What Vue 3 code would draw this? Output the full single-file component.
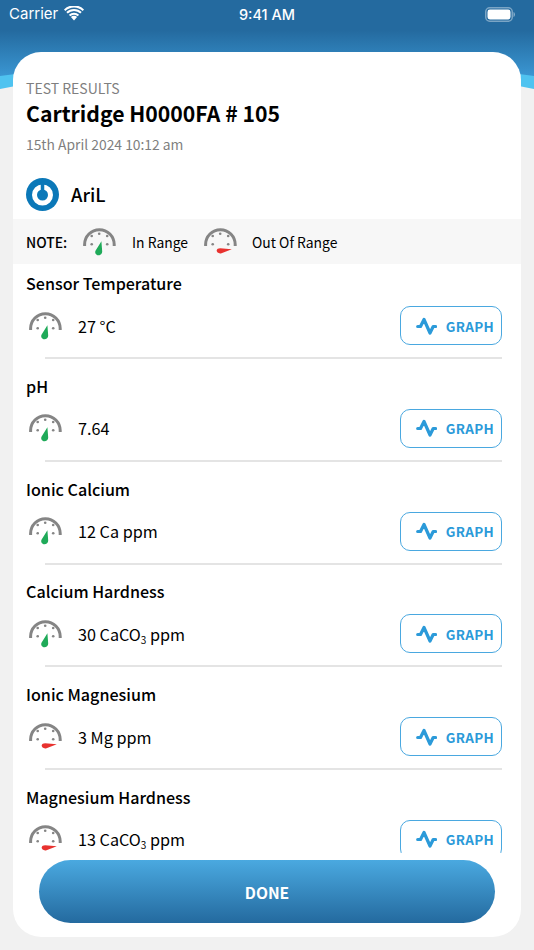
<script setup>
const rows = [
  { title: 'Sensor Temperature', value: '27 °C', ok: true },
  { title: 'pH', value: '7.64', ok: true },
  { title: 'Ionic Calcium', value: '12 Ca ppm', ok: true },
  { title: 'Calcium Hardness', pre: '30 CaCO', post: ' ppm', ok: true },
  { title: 'Ionic Magnesium', value: '3 Mg ppm', ok: false },
  { title: 'Magnesium Hardness', pre: '13 CaCO', post: ' ppm', ok: false },
]
const dots = [[9.7, 9], [17.2, 6.8], [25.2, 9], [9.7, 17.3], [25.2, 17.3]]
const arc = 'M2.600 19V17.500A14.800 14.800 0 0 1 32.200 17.500V19'
const green = 'M19.400 14.200 20.200 24.500c.2 2.400-1.900 3.800-3.700 3.800-2.700 0-3.900-2.500-3-4.500Z'
const red = 'M28.800 22.300 18.500 26.200c-2.800.7-4.900-.8-4.800-2.600.1-1.500 1.500-2.300 3.500-2.300Z'
</script>

<template>
  <div class="page">
    <svg class="backdrop" viewBox="0 0 534 100" width="534" height="100" preserveAspectRatio="none" aria-hidden="true">
      <defs>
        <linearGradient id="sky" x1="0" y1="0" x2="0" y2="1">
          <stop offset="0" stop-color="#246a9f" />
          <stop offset="0.4" stop-color="#246a9f" />
          <stop offset="1" stop-color="#3a96d2" />
        </linearGradient>
      </defs>
      <path d="M0 0 H534 V89 Q400 62 267 62 Q134 62 0 89 Z" fill="#4fc3f0" />
      <path d="M0 0 H534 V76 Q400 58 267 58 Q134 58 0 76 Z" fill="url(#sky)" />
    </svg>

    <div class="status">
      <div class="status-left">
        <span>Carrier</span>
        <svg width="20" height="15" viewBox="0 0 20 15">
          <path d="M10 14.500 6.900 11a4.400 4.400 0 0 1 6.200 0Z" fill="#fff" />
          <path d="M4.900 8.800a7.300 7.300 0 0 1 10.200 0l-1.300 1.400a5.400 5.400 0 0 0-7.600 0Z" fill="#fff" />
          <path d="M2.300 6.100a11 11 0 0 1 15.400 0l-1.400 1.400a9 9 0 0 0-12.600 0Z" fill="#fff" />
          <path d="M-.1 3.500a14.400 14.400 0 0 1 20.200 0L18.700 5A12.400 12.400 0 0 0 1.300 5Z" fill="#fff" />
        </svg>
      </div>
      <span class="clock">9:41 AM</span>
      <svg class="battery" width="30" height="15" viewBox="0 0 30 15">
        <rect x="0.750" y="0.750" width="26.500" height="13.500" rx="4" fill="none" stroke="#fff" stroke-opacity="0.4" stroke-width="1.500" />
        <rect x="2.500" y="2.500" width="23" height="10" rx="2.400" fill="#fff" />
        <path d="M28.500 5v5c.9-.3 1.500-1.400 1.500-2.500S29.400 5.300 28.500 5Z" fill="#fff" fill-opacity="0.45" />
      </svg>
    </div>

    <main class="card">
      <header class="head">
        <div class="eyebrow">TEST RESULTS</div>
        <h1 class="title">Cartridge H0000FA # 105</h1>
        <div class="date">15th April 2024 10:12 am</div>
      </header>

      <div class="user">
        <svg width="33" height="33" viewBox="0 0 33 33">
          <circle cx="16.500" cy="16.500" r="16.500" fill="#0b78b8" />
          <circle cx="16.500" cy="17" r="8" fill="none" stroke="#fff" stroke-width="5" />
          <path d="M16.500 5v11" stroke="#0b78b8" stroke-width="3.500" stroke-linecap="round" />
        </svg>
        <span>AriL</span>
      </div>

      <div class="note">
        <strong>NOTE:</strong>
        <svg class="gauge" viewBox="0 0 36 30" width="36" height="30">
          <path :d="arc" fill="none" stroke="#858585" stroke-width="3" />
          <circle v-for="d in dots" :key="d.join()" :cx="d[0]" :cy="d[1]" r="1.300" fill="#858585" />
          <path :d="green" fill="#1faa59" />
        </svg>
        <span class="in-range">In Range</span>
        <svg class="gauge" viewBox="0 0 36 30" width="36" height="30">
          <path :d="arc" fill="none" stroke="#858585" stroke-width="3" />
          <circle v-for="d in dots" :key="d.join()" :cx="d[0]" :cy="d[1]" r="1.300" fill="#858585" />
          <path :d="red" fill="#e8322f" />
        </svg>
        <span class="out-range">Out Of Range</span>
      </div>

      <div class="list">
        <section v-for="r in rows" :key="r.title" class="row">
          <div class="row-title">{{ r.title }}</div>
          <div class="row-body">
            <svg class="gauge" viewBox="0 0 36 30" width="36" height="30">
              <path :d="arc" fill="none" stroke="#858585" stroke-width="3" />
              <circle v-for="d in dots" :key="d.join()" :cx="d[0]" :cy="d[1]" r="1.300" fill="#858585" />
              <path :d="r.ok ? green : red" :fill="r.ok ? '#1faa59' : '#e8322f'" />
            </svg>
            <span class="value">
              <template v-if="r.value">{{ r.value }}</template>
              <template v-else>{{ r.pre }}<sub>3</sub>{{ r.post }}</template>
            </span>
            <button class="graph" type="button">
              <svg width="21" height="18" viewBox="0 0 21 18">
                <path d="M1.700 9.500H4.500L8 2.500 14 16 17.200 9.500H19.500" fill="none" stroke="#2b9ad9" stroke-width="3.200" stroke-linecap="round" stroke-linejoin="round" />
              </svg>
              <span>GRAPH</span>
            </button>
          </div>
          <div class="rule"></div>
        </section>
      </div>

      <div class="foot">
        <button class="done" type="button">DONE</button>
      </div>
    </main>
  </div>
</template>

<style>
html, body { margin: 0; background: #f1f1f1; }
</style>

<style scoped>
.page {
  position: relative;
  width: 534px;
  height: 950px;
  overflow: hidden;
  background: #f1f1f1;
  font-family: "Noto Sans CJK SC", "Noto Sans", sans-serif;
  color: #000;
}
.backdrop { position: absolute; top: 0; left: 0; }
.status {
  position: relative;
  height: 28px;
  display: flex;
  align-items: center;
  padding: 0 19px 0 9px;
  color: #fff;
  font-family: Inter, "Liberation Sans", sans-serif;
  font-size: 15px;
}
.status-left { display: flex; align-items: center; gap: 6px; width: 120px; margin-top: -1px; }
.clock { position: absolute; left: 0; right: 0; text-align: center; font-size: 14.500px; font-weight: 500; }
.battery { margin-left: auto; }
.card {
  position: relative;
  margin: 24px 13px 0;
  width: 508px;
  height: 885px;
  background: #fff;
  border-radius: 28px;
  overflow: hidden;
  display: flex;
  flex-direction: column;
}
.head { padding: 26px 13px 0; }
.eyebrow { font-size: 14px; line-height: 20px; color: #7f7f7f; }
.title { margin: 0; font-size: 21.200px; line-height: 30px; font-weight: 700; }
.date { margin-top: 6px; font-size: 13.850px; line-height: 20px; color: #7f7f7f; }
.user {
  display: flex;
  align-items: center;
  gap: 12px;
  padding: 18px 13px 0;
  height: 44px;
  font-size: 18.400px;
  font-weight: 500;
}
.note {
  display: flex;
  align-items: center;
  height: 45px;
  margin-top: 3px;
  padding: 0 13px;
  background: #f7f7f7;
  font-size: 13.900px;
}
.note strong { font-weight: 500; width: 56px; }
.in-range { margin-left: 14px; width: 55px; margin-right: 16px; white-space: nowrap; }
.out-range { margin-left: 13px; white-space: nowrap; }
.list { flex: 1; min-height: 0; overflow: hidden; }
.row { height: 102.800px; box-sizing: border-box; padding-top: 8px; }
.row-title { padding-left: 13px; font-size: 16.100px; line-height: 22px; font-weight: 500; }
.row-body {
  display: flex;
  align-items: center;
  height: 39px;
  margin-top: 12px;
  padding: 0 19px 0 15px;
}
.gauge { flex: none; display: block; }
.value { margin-left: 14px; font-size: 16.200px; line-height: 24px; }
.value sub { font-size: 10px; line-height: 0; vertical-align: -3px; }
.graph {
  margin-left: auto;
  box-sizing: border-box;
  width: 102px;
  height: 39px;
  display: flex;
  align-items: center;
  justify-content: flex-end;
  gap: 9px;
  padding: 0 7px 0 0;
  background: #fff;
  border: 1.500px solid #4aa8e0;
  border-radius: 10px;
  color: #2b9ad9;
  font-family: inherit;
  font-size: 13.500px;
  font-weight: 700;
  letter-spacing: 0.300px;
}
.rule { height: 2px; margin: 12px 19px 0 32px; background: #e4e4e4; }
.foot { padding: 7px 26px 14px; }
.done {
  display: block;
  width: 100%;
  height: 63px;
  border: 0;
  border-radius: 32px;
  background: linear-gradient(#4aa9e0, #246a9f);
  color: #fff;
  font-family: inherit;
  font-size: 15.600px;
  font-weight: 700;
}
</style>
